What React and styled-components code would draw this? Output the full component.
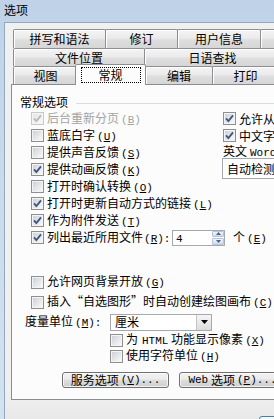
import React from 'react';
import styled, { createGlobalStyle } from 'styled-components';

const GlobalStyle = createGlobalStyle`
  html, body { margin: 0; padding: 0; background: #c4d6ea; }
  body {
    font-family: "Noto Sans CJK SC", "Liberation Sans", sans-serif;
    font-size: 12px;
    color: #000;
  }
  u { text-decoration: underline; text-underline-offset: 1px; }
`;

const Window = styled.div`
  width: 274px;
  height: 419px;
  overflow: hidden;
  display: flex;
  flex-direction: column;
  background: linear-gradient(180deg, #bfd2e7 0%, #c9daec 40%, #d3e2f1 100%);
`;

const TitleBar = styled.div`
  height: 22px;
  flex: none;
  padding-left: 4px;
  font-size: 12px;
  line-height: 19px;
`;

const Frame = styled.div`
  flex: 1;
  min-height: 0;
  display: flex;
  padding-left: 4px;
`;

const Client = styled.div`
  flex: 1;
  min-width: 0;
  background: linear-gradient(180deg, #f0f0f0 0%, #f0f0f0 92%, #e9e9e9 100%);
  border-left: 1px solid #93a9c2;
  border-top: 1px solid #93a9c2;
  padding: 6px 0 0 6px;
  display: flex;
  flex-direction: column;
`;

const TabRow = styled.div`
  display: flex;
  height: ${p => p.$h}px;
  margin-left: 2px;
  flex: none;
`;

const Tab = styled.div`
  box-sizing: border-box;
  flex: none;
  width: ${p => p.$w}px;
  height: ${p => (p.$active ? 'calc(100% + 3px)' : '100%')};
  margin-top: ${p => (p.$active ? '-2px' : '0')};
  margin-right: -1px;
  margin-left: ${p => (p.$active ? '-2px' : '0')};
  position: ${p => (p.$active ? 'relative' : 'static')};
  z-index: ${p => (p.$active ? 1 : 'auto')};
  border: 1px solid #8c8e94;
  border-bottom: none;
  border-radius: 2px 2px 0 0;
  background: ${p =>
    p.$active
      ? '#fcfcfc'
      : 'linear-gradient(180deg, #f4f4f4 0%, #ebebeb 45%, #dedede 55%, #d6d6d6 100%)'};
  box-shadow: inset 1px 1px 0 #ffffff;
  display: flex;
  align-items: ${p => (p.$active ? 'flex-start' : 'center')};
  justify-content: center;
  padding-top: ${p => (p.$active ? '2px' : '0')};
  line-height: 14px;
  white-space: nowrap;
`;

const FocusBox = styled.span`
  display: block;
  width: 58px;
  height: 14px;
  border: 1px dotted #000;
  text-align: center;
  line-height: 14px;
`;

const Panel = styled.div`
  box-sizing: border-box;
  flex: none;
  width: 300px;
  height: 316px;
  border: 1px solid #898c95;
  background: #fcfcfc;
  padding: 10px 0 0 8px;
  display: flex;
  flex-direction: column;
`;

const GroupHeader = styled.div`
  display: flex;
  align-items: center;
  gap: 8px;
  height: 14px;
  line-height: 14px;
  margin-bottom: 1px;
`;

const GroupLine = styled.div`
  flex: 1;
  border-top: 1px solid #d5dfe5;
  margin-top: 2px;
`;

const Body = styled.div`
  margin-left: 11px;
  display: flex;
  flex-direction: column;
`;

const TopGrid = styled.div`
  display: grid;
  grid-template-columns: 192px 1fr;
`;

const Col = styled.div`
  display: flex;
  flex-direction: column;
  min-width: 0;
`;

const Row = styled.div`
  display: flex;
  align-items: center;
  gap: 3px;
  height: ${p => p.$h || 17}px;
  margin-left: ${p => p.$indent || 0}px;
  margin-top: ${p => p.$mt || 0}px;
  white-space: nowrap;
  color: ${p => (p.$disabled ? '#a3a3a3' : '#000')};
  line-height: 14px;
`;

const Label = styled.span`
  flex: none;
  width: ${p => (p.$w ? `${p.$w}px` : 'auto')};
`;

const Lat = styled.span`
  font-family: "Liberation Mono", monospace;
  font-size: 11px;
  margin-left: ${p => p.$gap || 0}px;
`;

const SmallLabel = styled.div`
  height: 14px;
  line-height: 14px;
  white-space: nowrap;
`;

const Combo = styled.div`
  box-sizing: border-box;
  flex: none;
  width: ${p => p.$w}px;
  height: ${p => p.$h}px;
  margin-left: ${p => p.$ml || 0}px;
  border: 1px solid #a5a8ae;
  background: #fff;
  display: flex;
  align-items: center;
  padding-left: 4px;
  white-space: nowrap;
  overflow: hidden;
`;

const ComboText = styled.span`
  flex: 1;
`;

const DropButton = styled.span`
  box-sizing: border-box;
  flex: none;
  width: 15px;
  height: 100%;
  border-left: 1px solid #c2c5ca;
  background: linear-gradient(180deg, #f6f6f6, #dcdcdc);
  display: flex;
  align-items: center;
  justify-content: center;
`;

const Spinner = styled.div`
  box-sizing: border-box;
  flex: none;
  width: 53px;
  height: 16px;
  border: 1px solid #a5a8ae;
  background: #fff;
  display: flex;
  align-items: center;
  padding-left: 3px;
  margin-right: 5px;
`;

const SpinButtons = styled.span`
  flex: none;
  width: 12px;
  height: 14px;
  display: flex;
  flex-direction: column;
  gap: 1px;
`;

const SpinHalf = styled.span`
  flex: 1;
  background: linear-gradient(180deg, #eef3fa, #cfdcec);
  border: 1px solid #b5c4d8;
  border-radius: 1px;
  display: flex;
  align-items: center;
  justify-content: center;
`;

const ButtonRow = styled.div`
  display: flex;
  gap: 10px;
  margin-top: 8px;
  margin-left: 31px;
`;

const PushButton = styled.div`
  box-sizing: border-box;
  flex: none;
  width: ${p => p.$w}px;
  height: ${p => p.$h || 16}px;
  border: 1px solid ${p => (p.$default ? '#3c7fb1' : '#707070')};
  border-radius: 3px;
  background: linear-gradient(180deg, #f2f2f2 0%, #ebebeb 45%, #dddddd 50%, #cfcfcf 100%);
  box-shadow: inset 0 0 0 1px rgba(255, 255, 255, 0.7);
  display: flex;
  align-items: center;
  justify-content: center;
  line-height: 14px;
  white-space: nowrap;
`;

const Footer = styled.div`
  flex: none;
  height: 19px;
  overflow: hidden;
  display: flex;
  align-items: flex-start;
  padding: 16px 0 0 248px;
  box-sizing: border-box;
`;

const CheckBox = ({ checked, disabled }) => {
  const border = disabled ? '#c9c9c9' : '#8e8f8f';
  const check = disabled ? '#b9b9b9' : '#3f5580';
  const id = disabled ? 'cbd' : 'cbn';
  return (
    <svg width="13" height="13" viewBox="0 0 13 13" style={{ flex: 'none' }}>
      <defs>
        <linearGradient id={id} x1="0" y1="0" x2="1" y2="1">
          <stop offset="0" stopColor={disabled ? '#e6e6e6' : '#cdd2d9'} />
          <stop offset="1" stopColor="#f8f8f8" />
        </linearGradient>
      </defs>
      <rect x="0.5" y="0.5" width="12" height="12" fill="#f4f4f4" stroke={border} />
      <rect x="2" y="2" width="9" height="9" fill={`url(#${id})`} />
      {checked && (
        <path d="M3 6.3 L5.4 9 L10 3.4" fill="none" stroke={check} strokeWidth="1.8" />
      )}
    </svg>
  );
};

const Opt = ({ checked, disabled, children, ...rest }) => (
  <Row $disabled={disabled} {...rest}>
    <CheckBox checked={checked} disabled={disabled} />
    <span>{children}</span>
  </Row>
);

const M = ({ k, after = '', gap = 2 }) => (
  <Lat $gap={gap}>
    (<u>{k}</u>){after}
  </Lat>
);

const tabRows = [
  { h: 19, tabs: [{ l: '拼写和语法', w: 93 }, { l: '修订', w: 73 }, { l: '用户信息', w: 84 }, { l: '', w: 40 }] },
  { h: 18, tabs: [{ l: '文件位置', w: 132 }, { l: '日语查找', w: 137 }] },
  { h: 18, tabs: [{ l: '视图', w: 65 }, { l: '常规', w: 71, active: true }, { l: '编辑', w: 68 }, { l: '打印', w: 67 }] },
];

export default function App() {
  return (
    <>
      <GlobalStyle />
      <Window>
        <TitleBar>选项</TitleBar>
        <Frame>
          <Client>
            {tabRows.map((r, i) => (
              <TabRow key={i} $h={r.h}>
                {r.tabs.map((t, j) => (
                  <Tab key={j} $w={t.w} $active={t.active}>
                    {t.active ? <FocusBox>{t.l}</FocusBox> : t.l}
                  </Tab>
                ))}
              </TabRow>
            ))}
            <Panel>
              <GroupHeader>
                <span>常规选项</span>
                <GroupLine />
              </GroupHeader>
              <Body>
                <TopGrid>
                  <Col>
                    <Opt checked disabled>后台重新分页<M k="B" /></Opt>
                    <Opt>蓝底白字<M k="U" /></Opt>
                    <Opt>提供声音反馈<M k="S" /></Opt>
                    <Opt checked>提供动画反馈<M k="K" /></Opt>
                    <Opt>打开时确认转换<M k="O" /></Opt>
                    <Opt checked>打开时更新自动方式的链接<M k="L" /></Opt>
                    <Opt checked>作为附件发送<M k="T" /></Opt>
                  </Col>
                  <Col>
                    <Opt checked>允许从后往前删除</Opt>
                    <Opt checked>中文字体也应用于西文</Opt>
                    <SmallLabel>英文<Lat $gap={3}>Word 6.0/95</Lat> 文档<M k="W" after=":" /></SmallLabel>
                    <Combo $w={120} $h={21} $ml={-1}>
                      <ComboText>自动检测内容</ComboText>
                    </Combo>
                  </Col>
                </TopGrid>
                <Row>
                  <CheckBox checked />
                  <Label $w={122}>列出最近所用文件<M k="R" after=":" gap={1} /></Label>
                  <Spinner>
                    <ComboText><Lat>4</Lat></ComboText>
                    <SpinButtons>
                      <SpinHalf>
                        <svg width="5" height="3" viewBox="0 0 5 3"><path d="M0 3 L2.5 0 L5 3 Z" fill="#4d6185" /></svg>
                      </SpinHalf>
                      <SpinHalf>
                        <svg width="5" height="3" viewBox="0 0 5 3"><path d="M0 0 L2.5 3 L5 0 Z" fill="#4d6185" /></svg>
                      </SpinHalf>
                    </SpinButtons>
                  </Spinner>
                  <span>个<M k="E" /></span>
                </Row>
                <Opt $h={20} $mt={26}>允许网页背景开放<M k="G" /></Opt>
                <Opt $h={20}>插入“自选图形”时自动创建绘图画布<M k="C" /></Opt>
                <Row $h={20} $indent={-6}>
                  <Label $w={82}>度量单位<M k="M" after=":" /></Label>
                  <Combo $w={102} $h={17}>
                    <ComboText>厘米</ComboText>
                    <DropButton>
                      <svg width="7" height="4" viewBox="0 0 7 4"><path d="M0 0 L7 0 L3.5 4 Z" fill="#000" /></svg>
                    </DropButton>
                  </Combo>
                </Row>
                <Opt $h={16} $indent={79}>为<Lat $gap={4}>HTML</Lat> 功能显示像素<M k="X" /></Opt>
                <Opt $h={16} $indent={79}>使用字符单位<M k="H" /></Opt>
                <ButtonRow>
                  <PushButton $w={107}>服务选项<M k="V" after="..." /></PushButton>
                  <PushButton $w={107}><Lat>Web</Lat>&nbsp;选项<M k="P" after="..." /></PushButton>
                </ButtonRow>
              </Body>
            </Panel>
            <Footer>
              <PushButton $w={75} $h={23} $default>确定</PushButton>
            </Footer>
          </Client>
        </Frame>
      </Window>
    </>
  );
}
